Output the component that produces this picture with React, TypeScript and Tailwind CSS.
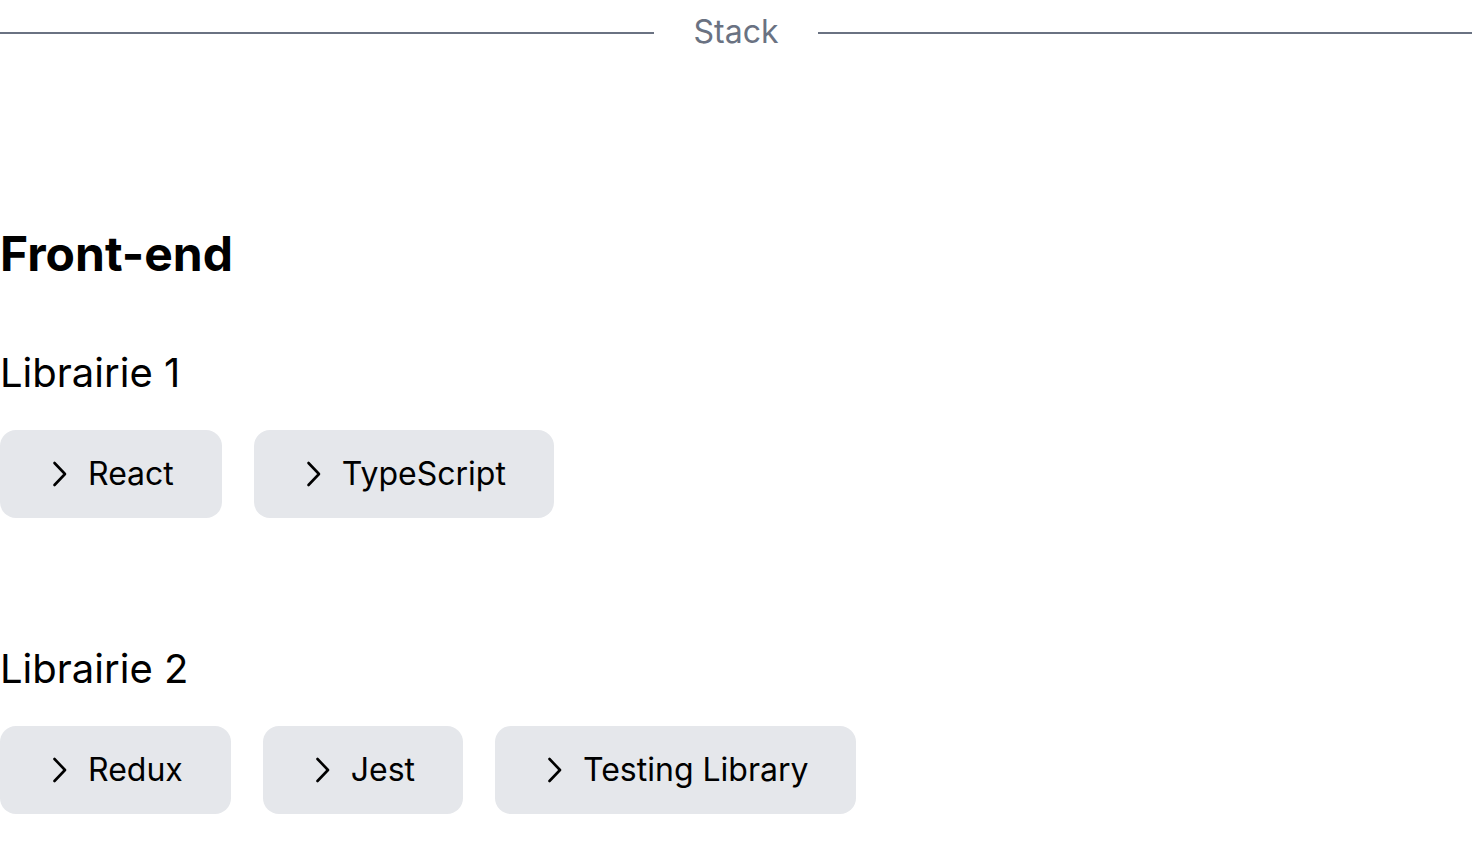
import React from "react";

const font = { fontFamily: "Inter, 'Noto Sans', sans-serif" };

function Chevron() {
  return (
    <svg width="24" height="28" viewBox="0 0 24 28" fill="none" className="shrink-0">
      <polyline
        points="6.5,3 17,14 6.5,25"
        stroke="#000"
        strokeWidth="2.6"
        strokeLinecap="round"
        strokeLinejoin="round"
      />
    </svg>
  );
}

function Tag({ label }: { label: string }) {
  return (
    <div className="flex h-[88px] items-center gap-4 rounded-2xl bg-gray-200 px-12">
      <Chevron />
      <span className="text-[32px] leading-[48px] text-black">{label}</span>
    </div>
  );
}

function Library({ title, items, className }: { title: string; items: string[]; className?: string }) {
  return (
    <div className={className}>
      <h3 className="text-[40px] leading-[60px] font-normal text-black">{title}</h3>
      <div className="mt-[27px] flex gap-8">
        {items.map((item) => (
          <Tag key={item} label={item} />
        ))}
      </div>
    </div>
  );
}

export default function App() {
  return (
    <div className="min-h-screen w-full bg-white" style={font}>
      <div className="flex h-16 items-center gap-10">
        <div className="mt-[2px] h-[2px] flex-1 bg-gray-500" />
        <span className="text-[32px] leading-[48px] text-gray-500">Stack</span>
        <div className="mt-[2px] h-[2px] flex-1 bg-gray-500" />
      </div>
      <section className="mt-[166px]">
        <h2 className="text-5xl leading-[48px] font-bold text-black">Front-end</h2>
        <Library className="mt-[65px]" title="Librairie 1" items={["React", "TypeScript"]} />
        <Library className="mt-[121px]" title="Librairie 2" items={["Redux", "Jest", "Testing Library"]} />
      </section>
    </div>
  );
}
